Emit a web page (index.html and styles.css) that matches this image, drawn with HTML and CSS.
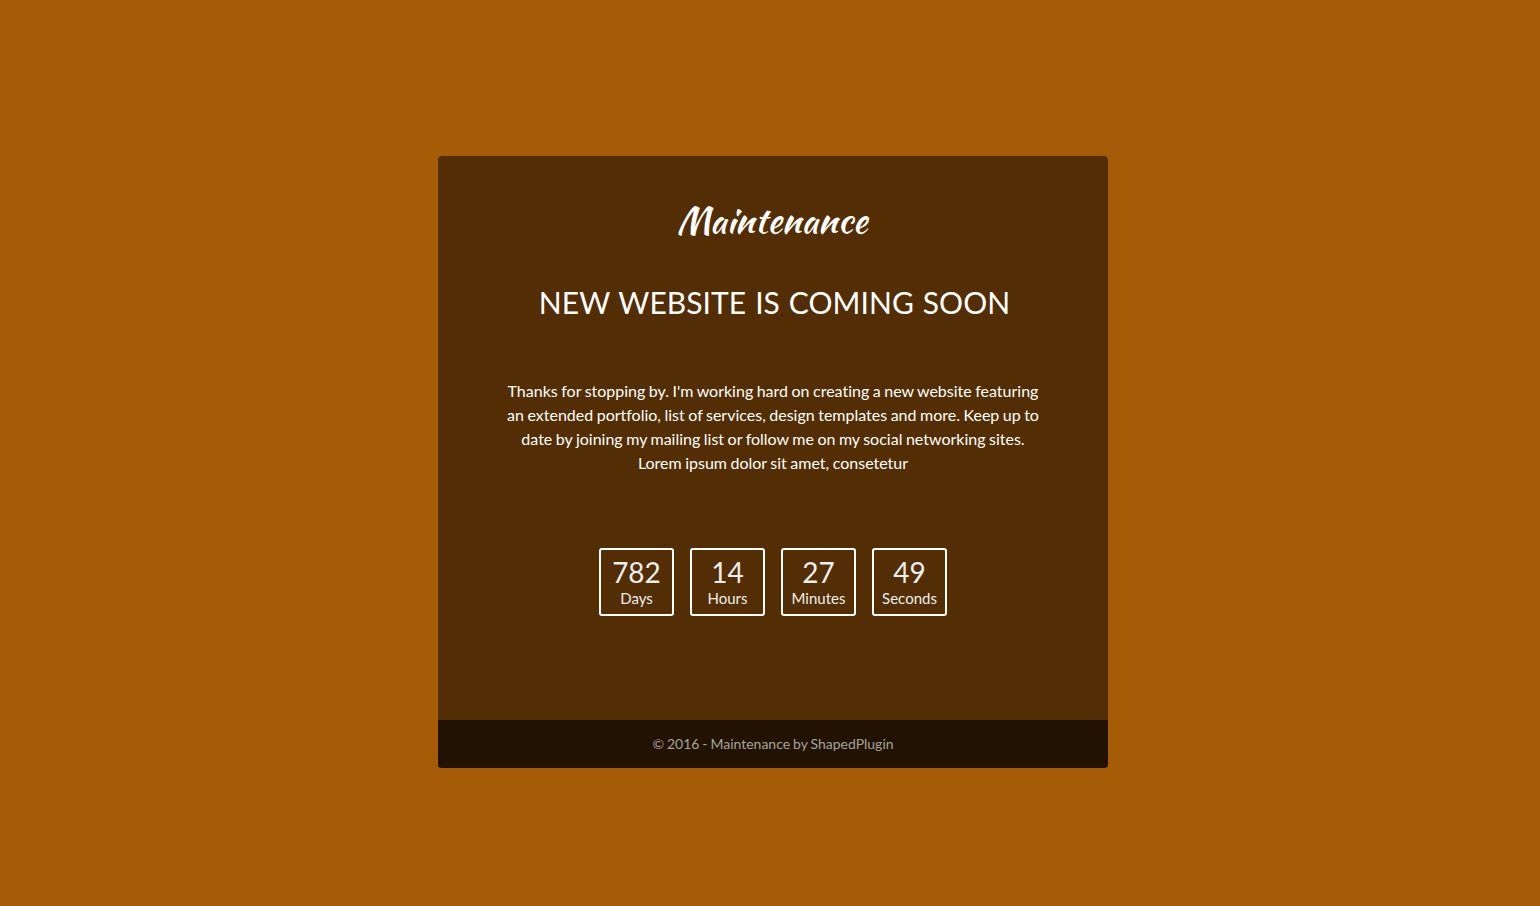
FILE: index.html
```html
<!DOCTYPE html>
<html lang="en">
<head>
<meta charset="utf-8">
<title>Maintenance</title>
<link rel="stylesheet" href="styles.css">
</head>
<body>
<main class="card">
  <div class="content">
    <div class="logo"><span class="logo-text">Maintenance</span></div>
    <h1 class="title">NEW WEBSITE IS COMING SOON</h1>
    <p class="intro">Thanks for stopping by. I'm working hard on creating a new website featuring an extended portfolio, list of services, design templates and more. Keep up to date by joining my mailing list or follow me on my social networking sites. Lorem ipsum dolor sit amet, consetetur</p>
    <div class="countdown">
      <div class="unit"><span class="num">782</span><span class="label">Days</span></div>
      <div class="unit"><span class="num">14</span><span class="label">Hours</span></div>
      <div class="unit"><span class="num">27</span><span class="label">Minutes</span></div>
      <div class="unit"><span class="num">49</span><span class="label">Seconds</span></div>
    </div>
  </div>
  <footer class="footer">© 2016 - Maintenance by ShapedPlugin</footer>
</main>
</body>
</html>
```
FILE: styles.css
```css
* { box-sizing: border-box; }
body {
  margin: 0;
  min-height: 906px;
  padding-top: 156px;
  background: #a65c06;
  color: #fff;
  font-family: Lato, sans-serif;
  font-variant-ligatures: none;
}
.card {
  width: 670px;
  margin-left: 438px;
  border-radius: 4px;
  overflow: hidden;
  background: #532d03;
}
.content { height: 564px; padding: 39px 60px 0; text-align: center; }
.logo { height: 50px; padding-right: 2px; }
.logo-text {
  font: 400 36px/50px "Kaushan Script", Lato, cursive;
  white-space: nowrap;
}
.title { margin: 37px 0 0; padding-left: 3px; font-size: 30px; font-weight: 400; line-height: 40px; letter-spacing: 0.05px; word-spacing: 1.2px; white-space: nowrap; }
.intro { margin: 57px auto 0; width: 550px; font-size: 16px; line-height: 24px; word-spacing: -0.6px; }
.countdown { display: flex; justify-content: center; gap: 16px; margin-top: 73px; }
.unit {
  width: 75px;
  height: 68px;
  padding-top: 6px;
  border: 2px solid #fff;
  border-radius: 3px;
  display: flex;
  flex-direction: column;
  align-items: center;
}
.num { color: #eee; font-size: 28px; line-height: 32px; }
.label { color: #eee; font-size: 15px; line-height: 20px; }
.footer {
  height: 48px;
  background: #211201;
  color: #a6a29e;
  font-size: 14px;
  line-height: 48px;
  text-align: center;
  word-spacing: -0.7px;
}
```
